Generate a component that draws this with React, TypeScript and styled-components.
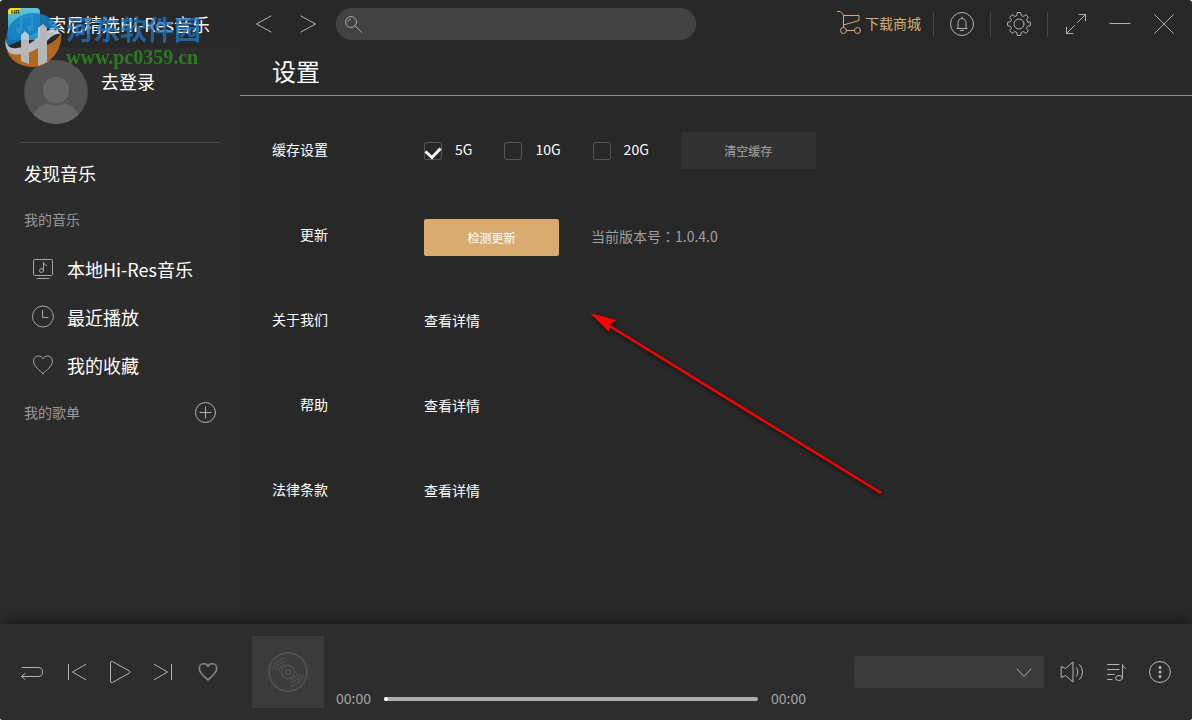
import React from "react";
import styled, { createGlobalStyle, css } from "styled-components";

const GlobalStyle = createGlobalStyle`
  *, *::before, *::after { box-sizing: border-box; }
  body {
    margin: 0;
    background: #fff;
    font-family: "Noto Sans CJK SC", "Noto Sans", sans-serif;
    font-size: 14px;
    line-height: 20px;
    color: #fff;
  }
  button, input, select { font: inherit; color: inherit; margin: 0; }
  h1, h2, p, ul, dl, dd { margin: 0; padding: 0; font-weight: 400; }
  ul { list-style: none; }
  a { color: inherit; text-decoration: none; }
`;

const Shell = styled.div`
  position: relative;
  display: flex;
  flex-direction: column;
  min-height: 100vh;
  overflow: hidden;
  border-radius: 3px;
  background: #282828;
`;

const Body = styled.div`
  display: flex;
  flex: 1;
`;

const Icon = styled.svg<{ $size?: number; $weight?: number }>`
  display: block;
  flex: none;
  width: ${(p) => p.$size ?? 24}px;
  height: ${(p) => p.$size ?? 24}px;
  fill: none;
  stroke: currentColor;
  stroke-width: ${(p) => p.$weight ?? 1};
  stroke-linecap: round;
  stroke-linejoin: round;
`;

const IconButton = styled.button<{ $dim?: boolean }>`
  display: block;
  flex: none;
  padding: 0;
  border: 0;
  background: none;
  color: ${(p) => (p.$dim ? "#7d7d7d" : "#b4b4b4")};
  cursor: pointer;
`;

/* ---------- title bar ---------- */

const TitleBar = styled.header`
  display: flex;
  align-items: center;
  height: 48px;
  padding-right: 16px;
`;

const Brand = styled.div`
  display: flex;
  align-items: center;
  gap: 8px;
  width: 240px;
  padding-left: 8px;
  font-size: 18px;
  line-height: 24px;
  white-space: nowrap;
`;

const History = styled.nav`
  display: flex;
  gap: 20px;
  padding: 0 16px 0 12px;
`;

const Search = styled.label`
  display: flex;
  flex: 0 1 360px;
  align-items: center;
  height: 32px;
  padding: 0 16px 0 6px;
  gap: 8px;
  border-radius: 16px;
  background: #424242;
  color: #a8a8a8;
`;

const SearchInput = styled.input`
  flex: 1;
  min-width: 0;
  border: 0;
  outline: 0;
  background: none;
`;

const Tools = styled.div`
  display: flex;
  align-items: center;
  margin-left: auto;
`;

const StoreLink = styled.a`
  display: flex;
  align-items: center;
  gap: 4px;
  margin-right: 12px;
  padding-bottom: 2px;
  color: #d9ab70;
  white-space: nowrap;
`;

const Separator = styled.span`
  width: 1px;
  height: 25px;
  background: #4a4a4a;
`;

const ToolSlot = styled.div`
  padding: 0 16px;
`;

const WindowButtons = styled.div`
  display: flex;
  gap: 20px;
  padding-left: 16px;
`;

/* ---------- sidebar ---------- */

const Sidebar = styled.aside`
  flex: none;
  width: 240px;
  padding: 12px 20px;
  background: #2c2c2c;
`;

const Profile = styled.div`
  display: flex;
  gap: 13px;
  padding: 0 4px 18px;
  border-bottom: 1px solid #4b4b4b;
`;

const LoginLink = styled.a`
  padding-top: 9px;
  font-size: 18px;
  line-height: 24px;
`;

const DiscoverLink = styled.a`
  display: block;
  padding: 18px 4px 0;
  font-size: 18px;
  line-height: 24px;
`;

const GroupHeading = styled.div<{ $first?: boolean }>`
  display: flex;
  align-items: center;
  justify-content: space-between;
  height: 24px;
  margin-top: ${(p) => (p.$first ? 22 : 11)}px;
  padding: 0 4px;
  color: #999;
`;

const Library = styled.ul`
  padding: 14px 0 0 11px;
`;

const LibraryLink = styled.a`
  display: flex;
  align-items: center;
  gap: 12px;
  height: 48px;
  font-size: 18px;
  line-height: 24px;

  svg { color: #a6a6a6; }
`;

/* ---------- settings ---------- */

const Main = styled.main`
  flex: 1;
  min-width: 0;
`;

const PageTitle = styled.h1`
  height: 48px;
  padding-left: 32px;
  border-bottom: 1px solid #8f8f8f;
  font-size: 24px;
  line-height: 46px;
`;

const SettingList = styled.div`
  padding: 12px 32px 0;
`;

const SettingRow = styled.section`
  display: grid;
  grid-template-columns: 56px 1fr;
  gap: 96px;
  align-items: center;
  height: 85px;
`;

const SettingName = styled.h2`
  padding-bottom: 4px;
  font-size: 14px;
  line-height: 20px;
  text-align: right;
  white-space: nowrap;
`;

const SettingValue = styled.div<{ $lowered?: boolean }>`
  display: flex;
  align-items: center;
  gap: 32px;
  padding-top: ${(p) => (p.$lowered ? 4 : 0)}px;
`;

const DetailLink = styled.a`
  padding-bottom: 2px;
`;

const Choice = styled.label`
  display: flex;
  align-items: center;
  gap: 13px;
`;

const ChoiceText = styled.span`
  padding-bottom: 4px;
`;

const CheckSlot = styled.span`
  display: grid;
  width: 18px;
  height: 18px;

  > * { grid-area: 1 / 1; }
`;

const CheckInput = styled.input`
  appearance: none;
  width: 18px;
  height: 18px;
  border: 1px solid #555;
  border-radius: 2px;

  & + svg { visibility: hidden; pointer-events: none; }
  &:checked + svg { visibility: visible; }
`;

const ActionButton = styled.button<{ $primary?: boolean }>`
  width: 135px;
  height: 37px;
  padding: 0;
  border: 0;
  font-size: 12px;
  line-height: 20px;
  cursor: pointer;
  ${(p) =>
    p.$primary
      ? css`
          border-radius: 2px;
          background: #d9ab70;
          color: #fff;
        `
      : css`
          background: #323232;
          color: #a6a6a6;
        `}
`;

const Version = styled.p`
  padding-bottom: 4px;
  color: #a0a0a0;
`;

const CentredMark = styled.span`
  font-family: "Noto Sans CJK TC", sans-serif;
`;

/* ---------- player ---------- */

const Player = styled.footer`
  position: relative;
  display: flex;
  align-items: center;
  height: 96px;
  padding: 0 20px;
  background: #2d2d2d;
  box-shadow: 0 0 16px rgba(0, 0, 0, 0.6);
`;

const ButtonGroup = styled.div`
  display: flex;
  flex: none;
  gap: 20px;
`;

const Cover = styled.div`
  display: grid;
  flex: none;
  place-items: center;
  width: 72px;
  height: 72px;
  margin: 0 12px 0 32px;
  background: #3b3b3b;
  color: #4f4f4f;
`;

const Timeline = styled.div`
  display: flex;
  flex: 1;
  align-items: center;
  align-self: flex-end;
  gap: 13px;
  min-width: 0;
  margin-right: 48px;
  padding-bottom: 10px;
  color: #a6a6a6;
`;

const Time = styled.span`
  padding-bottom: 2px;
`;

const Seek = styled.input`
  appearance: none;
  flex: 1;
  min-width: 0;
  height: 4px;
  border-radius: 2px;
  background: #adadad;

  &::-webkit-slider-thumb {
    appearance: none;
    width: 4px;
    height: 4px;
    border-radius: 2px;
    background: #fff;
  }
`;

const Device = styled.label`
  display: grid;
  flex: none;
  align-items: center;
  width: 190px;
  margin-right: 16px;
  color: #b4b4b4;

  > * { grid-area: 1 / 1; }
  > svg { justify-self: end; margin-right: 8px; pointer-events: none; }
`;

const DeviceSelect = styled.select`
  appearance: none;
  width: 100%;
  height: 32px;
  padding: 0 40px 0 12px;
  border: 0;
  border-radius: 2px;
  background: #3b3b3b;
`;

/* ---------- overlays ---------- */

const Watermark = styled.div`
  position: absolute;
  top: 10px;
  left: 4px;
  display: flex;
  gap: 4px;
  pointer-events: none;
`;

const WatermarkText = styled.div`
  padding-top: 3px;
  white-space: nowrap;
`;

const SiteName = styled.p`
  font-size: 27px;
  line-height: 32px;
  font-weight: 700;
  color: #1a78c8;
  opacity: 0.75;
`;

const SiteUrl = styled.p`
  font-family: "Liberation Serif", serif;
  font-size: 20px;
  line-height: 24px;
  font-weight: 700;
  color: #2b8a1c;
  opacity: 0.85;
`;

const Pointer = styled.svg`
  position: absolute;
  top: 308px;
  left: 584px;
  width: 304px;
  height: 196px;
  pointer-events: none;
  filter: drop-shadow(1px 2px 2px rgba(0, 0, 0, 0.7));
`;

/* Outline of an eight-toothed cog centred in a 24px box. */
const cogPath = (() => {
  const at = (r: number, deg: number) => {
    const a = (deg * Math.PI) / 180;
    return `${(12 + r * Math.cos(a)).toFixed(2)} ${(12 + r * Math.sin(a)).toFixed(2)}`;
  };
  let d = "";
  for (let i = 0; i < 8; i++) {
    const c = i * 45;
    d += `${i ? "L" : "M"}${at(9.2, c - 13)}L${at(11.4, c - 9)}Q${at(11.9, c)} ${at(11.4, c + 9)}L${at(9.2, c + 13)}Q${at(7.8, c + 22.5)} ${at(9.2, c + 32)}`;
  }
  return d + "Z";
})();

const heartPath =
  "M12 20.5C8.8 17.6 2.5 13.2 2.5 8.2C2.5 5.2 4.7 3 7.4 3C9.4 3 11.1 4 12 5.8C12.9 4 14.6 3 16.6 3C19.3 3 21.5 5.2 21.5 8.2C21.5 13.2 15.2 17.6 12 20.5Z";

const sizes = ["5G", "10G", "20G"];
const details = ["关于我们", "帮助", "法律条款"];

function AppLogo() {
  return (
    <svg width="32" height="32" viewBox="0 0 32 32" aria-hidden="true">
      <defs>
        <linearGradient id="tile" x1="0" y1="0" x2="0" y2="1">
          <stop offset="0" stopColor="#62c6dc" />
          <stop offset="1" stopColor="#2592c4" />
        </linearGradient>
      </defs>
      <rect width="32" height="32" rx="4" fill="url(#tile)" />
      <path d="M4 0H13L10 6H0V4Q0 0 4 0Z" fill="#f2dc1e" />
      <text x="3" y="6" fontFamily="Liberation Sans" fontSize="6" fontWeight="700" fill="#222">HR</text>
      <path d="M13 22V10L24 8V20" fill="none" stroke="#d8f0f4" strokeWidth="2" />
      <circle cx="11" cy="22" r="3" fill="#d8f0f4" />
      <circle cx="22" cy="20" r="3" fill="#d8f0f4" />
    </svg>
  );
}

function WatermarkLogo() {
  return (
    <svg width="58" height="58" viewBox="4 10 58 58" aria-hidden="true">
      <g opacity="0.84">
        <path d="M7 46C4 32 11 20 21 16C34 9 54 14 60 31C53 27 46 28 40 31C30 35 20 42 7 46Z" fill="#0f80c6" />
        <path d="M61 33C63 49 50 67 33 67C20 67 10 60 7 51C22 54 35 50 45 46C53 43 58 38 61 33Z" fill="#c8741a" />
        <path d="M6 38C6 46 10 49 17 48C30 47 38 36 47 31C53 28 58 30 61 34C55 33 51 37 46 42C36 52 22 56 12 54C7 52 4 46 6 38Z" fill="#d3d8dc" />
        <path d="M21 35L25 31L29 35V64L21 61ZM38 28L43 24L47 28V62L38 66Z" fill="#cfd2d5" />
      </g>
    </svg>
  );
}

export default function App() {
  return (
    <>
      <GlobalStyle />
      <Shell>
        <TitleBar>
          <Brand>
            <AppLogo />
            <span>索尼精选Hi-Res音乐</span>
          </Brand>
          <History aria-label="历史">
            <IconButton aria-label="后退">
              <Icon viewBox="0 0 24 24"><path d="M19 4L4.500 12L19 20" /></Icon>
            </IconButton>
            <IconButton aria-label="前进">
              <Icon viewBox="0 0 24 24"><path d="M5 4L19.500 12L5 20" /></Icon>
            </IconButton>
          </History>
          <Search>
            <Icon viewBox="0 0 24 24">
              <circle cx="9" cy="10" r="5.500" />
              <path d="M6 9.500Q6.500 7.500 8.500 7M13 14L20 20.500" />
            </Icon>
            <SearchInput type="search" aria-label="搜索" />
          </Search>
          <Tools>
            <StoreLink href="#store">
              <Icon viewBox="0 0 24 24">
                <path d="M.5 .5H3.500L6.500 4V16M6.500 4.500H22V9.500L6.500 14M9.500 19.500H17.500" />
                <circle cx="6.500" cy="19.500" r="3" />
                <circle cx="20.500" cy="19.500" r="3" />
              </Icon>
              下载商城
            </StoreLink>
            <Separator />
            <ToolSlot>
              <IconButton aria-label="通知">
                <Icon viewBox="0 0 24 24">
                  <circle cx="12" cy="12" r="11.500" />
                  <path d="M7 16.500H17M8 16.500V11.500C8 8.500 9.500 6.500 12 6.500C14.500 6.500 16 8.500 16 11.500V16.500M12 5V6.500M10.500 18.500H13.500" />
                </Icon>
              </IconButton>
            </ToolSlot>
            <Separator />
            <ToolSlot>
              <IconButton aria-label="设置">
                <Icon viewBox="0 0 24 24">
                  <path d={cogPath} />
                  <circle cx="12" cy="12" r="5" />
                </Icon>
              </IconButton>
            </ToolSlot>
            <Separator />
            <WindowButtons>
              <IconButton aria-label="全屏">
                <Icon viewBox="0 0 24 24">
                  <path d="M2.500 21.500L10.500 13.500M13.500 10.500L21.500 2.500M15 2.500H21.500V9M2.500 15V21.500H9" />
                </Icon>
              </IconButton>
              <IconButton aria-label="最小化">
                <Icon viewBox="0 0 24 24"><path d="M2 11.500H22" /></Icon>
              </IconButton>
              <IconButton aria-label="关闭">
                <Icon viewBox="0 0 24 24"><path d="M2.500 2.500L21.500 21.500M21.500 2.500L2.500 21.500" /></Icon>
              </IconButton>
            </WindowButtons>
          </Tools>
        </TitleBar>

        <Body>
          <Sidebar>
            <Profile>
              <svg width="64" height="64" viewBox="0 0 64 64" aria-hidden="true">
                <clipPath id="face"><circle cx="32" cy="32" r="32" /></clipPath>
                <circle cx="32" cy="32" r="32" fill="#535353" />
                <g fill="#666" clipPath="url(#face)">
                  <circle cx="32" cy="30" r="13.500" />
                  <ellipse cx="32" cy="62" rx="24" ry="20" />
                </g>
                <circle cx="32" cy="30" r="14.500" fill="none" stroke="#535353" strokeWidth="2" />
              </svg>
              <LoginLink href="#login">去登录</LoginLink>
            </Profile>
            <DiscoverLink href="#discover">发现音乐</DiscoverLink>
            <GroupHeading $first>我的音乐</GroupHeading>
            <Library>
              <li>
                <LibraryLink href="#local">
                  <Icon viewBox="0 0 24 24">
                    <rect x="2.500" y="2.500" width="19" height="16" rx="1" />
                    <path d="M6 21.500H18M12.500 13V5.500Q13 8 15.500 8.500" />
                    <circle cx="10.500" cy="13.500" r="2" />
                  </Icon>
                  本地Hi-Res音乐
                </LibraryLink>
              </li>
              <li>
                <LibraryLink href="#recent">
                  <Icon viewBox="0 0 24 24">
                    <circle cx="12" cy="11.500" r="10.500" />
                    <path d="M11.500 5.500V12.500H17" />
                  </Icon>
                  最近播放
                </LibraryLink>
              </li>
              <li>
                <LibraryLink href="#favourites">
                  <Icon viewBox="0 0 24 24"><path d={heartPath} /></Icon>
                  我的收藏
                </LibraryLink>
              </li>
            </Library>
            <GroupHeading>
              我的歌单
              <IconButton aria-label="新建歌单">
                <Icon viewBox="0 0 22 22" $size={22}>
                  <circle cx="11.500" cy="11.500" r="10" />
                  <path d="M11.500 6V17M6 11.500H17" />
                </Icon>
              </IconButton>
            </GroupHeading>
          </Sidebar>

          <Main>
            <PageTitle>设置</PageTitle>
            <SettingList>
              <SettingRow>
                <SettingName>缓存设置</SettingName>
                <SettingValue>
                  {sizes.map((size, i) => (
                    <Choice key={size}>
                      <CheckSlot>
                        <CheckInput type="checkbox" defaultChecked={i === 0} />
                        <Icon viewBox="0 0 18 18" $size={18} $weight={3}>
                          <path d="M1.500 9.500L8 15.500L16.500 6.500" stroke="#fff" strokeLinecap="butt" strokeLinejoin="miter" />
                        </Icon>
                      </CheckSlot>
                      <ChoiceText>{size}</ChoiceText>
                    </Choice>
                  ))}
                  <ActionButton>清空缓存</ActionButton>
                </SettingValue>
              </SettingRow>
              <SettingRow>
                <SettingName>更新</SettingName>
                <SettingValue $lowered>
                  <ActionButton $primary>检测更新</ActionButton>
                  <Version>当前版本号<CentredMark>：</CentredMark>1.0.4.0</Version>
                </SettingValue>
              </SettingRow>
              {details.map((name) => (
                <SettingRow key={name}>
                  <SettingName>{name}</SettingName>
                  <SettingValue><DetailLink href="#detail">查看详情</DetailLink></SettingValue>
                </SettingRow>
              ))}
            </SettingList>
          </Main>
        </Body>

        <Player>
          <ButtonGroup>
            <IconButton aria-label="循环模式">
              <Icon viewBox="0 0 24 24">
                <path d="M2 7.500H18Q22.500 7.500 22.500 12T18 16.500H2M5 13.500L1.500 16.500L5 19.500" />
              </Icon>
            </IconButton>
            <IconButton aria-label="上一首">
              <Icon viewBox="0 0 24 24"><path d="M4.500 4.500V19.500M21.500 4.500L8.500 12L21.500 19.500" /></Icon>
            </IconButton>
            <IconButton aria-label="播放">
              <Icon viewBox="0 0 24 24"><path d="M2.500 2.500Q2.500 .5 4.500 1.500L21.500 11Q22.500 12 21.500 13L4.500 22.500Q2.500 23.500 2.500 21.500Z" /></Icon>
            </IconButton>
            <IconButton aria-label="下一首">
              <Icon viewBox="0 0 24 24"><path d="M19.500 4.500V19.500M2.500 4.500L15.500 12L2.500 19.500" /></Icon>
            </IconButton>
            <IconButton aria-label="收藏" $dim>
              <Icon viewBox="-1 -1 26 26" $weight={2}><path d={heartPath} /></Icon>
            </IconButton>
          </ButtonGroup>
          <Cover>
            <Icon viewBox="0 0 40 40" $size={40} $weight={2}>
              <circle cx="20" cy="20" r="19" />
              <circle cx="20" cy="20" r="6.500" />
              <circle cx="20" cy="20" r="2.500" />
              <path d="M5 17Q7.500 8.500 16 6M8 17.500Q10 11 16 9.500M11 18Q12.500 13.500 17 12.500M35 23Q32.500 31.500 24 34M32 22.500Q30 29 24 30.500M29 22Q27.500 26.500 23 27.500" strokeWidth="1.500" />
            </Icon>
          </Cover>
          <Timeline>
            <Time>00:00</Time>
            <Seek type="range" min={0} max={100} defaultValue={0} aria-label="播放进度" />
            <Time>00:00</Time>
          </Timeline>
          <Device>
            <DeviceSelect aria-label="输出设备"><option value="" /></DeviceSelect>
            <Icon viewBox="0 0 24 24"><path d="M5 9L12 16.500L19 9" /></Icon>
          </Device>
          <ButtonGroup>
            <IconButton aria-label="音量">
              <Icon viewBox="0 0 24 24">
                <path d="M1.500 6.500L5.500 8.500L13 2V22L5.500 15.500L1.500 17.500ZM16.500 8Q19.500 12 16.500 16M19.500 4.500Q26 12 19.500 19.500" />
              </Icon>
            </IconButton>
            <IconButton aria-label="播放列表">
              <Icon viewBox="0 0 24 24">
                <path d="M3.500 4.500H15M3.500 9.500H15M3.500 14.500H10M3.500 19.500H8M18.500 17.500V4.500Q18.500 6.500 21.500 8.500" />
                <ellipse cx="15" cy="18" rx="3.500" ry="2.500" />
              </Icon>
            </IconButton>
            <IconButton aria-label="更多信息">
              <Icon viewBox="0 0 24 24">
                <circle cx="12" cy="12" r="10.500" />
                <path d="M12 7.500V7.600M12 12V12.100M12 16.500V16.600" strokeWidth="3" />
              </Icon>
            </IconButton>
          </ButtonGroup>
        </Player>

        <Watermark>
          <WatermarkLogo />
          <WatermarkText>
            <SiteName>河东软件园</SiteName>
            <SiteUrl>www.pc0359.cn</SiteUrl>
          </WatermarkText>
        </Watermark>

        <Pointer viewBox="584 308 304 196" aria-hidden="true">
          <path d="M608 325L881 493" stroke="#fe0000" strokeWidth="2.500" />
          <path d="M590 313L616 320L610 325L609 332Z" fill="#fe0000" />
        </Pointer>
      </Shell>
    </>
  );
}
